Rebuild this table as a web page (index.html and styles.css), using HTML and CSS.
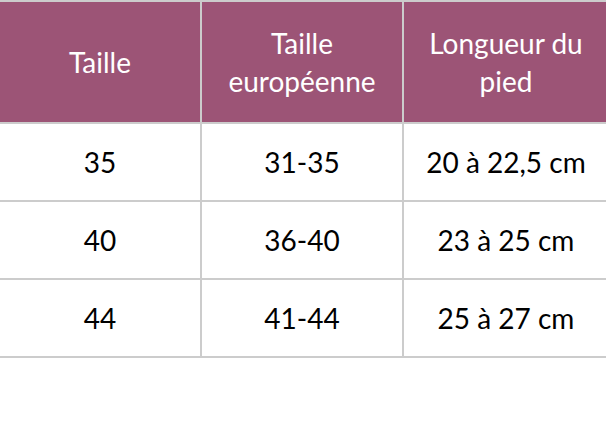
FILE: index.html
```html
<!DOCTYPE html>
<html lang="fr">
<head>
<meta charset="utf-8">
<title>Tableau des tailles</title>
<link rel="stylesheet" href="styles.css">
</head>
<body>
<div class="size-table">
  <div class="cell head">Taille</div>
  <div class="cell head">Taille<br>européenne</div>
  <div class="cell head">Longueur du<br>pied</div>

  <div class="cell">35</div>
  <div class="cell">31-35</div>
  <div class="cell">20 à 22,5 cm</div>

  <div class="cell">40</div>
  <div class="cell">36-40</div>
  <div class="cell">23 à 25 cm</div>

  <div class="cell">44</div>
  <div class="cell">41-44</div>
  <div class="cell">25 à 27 cm</div>
</div>
</body>
</html>
```

FILE: styles.css
```css
html, body {
  margin: 0;
  padding: 0;
  background: #ffffff;
  overflow: hidden;
}

body {
  width: 606px;
  height: 422px;
  font-family: Lato, "Open Sans", "Liberation Sans", sans-serif;
}

.size-table {
  display: grid;
  grid-template-columns: 202px 202px 206px;
  grid-template-rows: 122px 78px 78px 78px;
  margin-left: -2px;
  width: 610px;
  border-bottom: 2px solid #cccccc;
}

.cell {
  display: flex;
  align-items: center;
  justify-content: center;
  text-align: center;
  border-left: 2px solid #cccccc;
  border-top: 2px solid #cccccc;
  font-size: 28px;
  line-height: 38px;
  color: #000000;
}

.head {
  background: #9c5476;
  color: #ffffff;
}
```
